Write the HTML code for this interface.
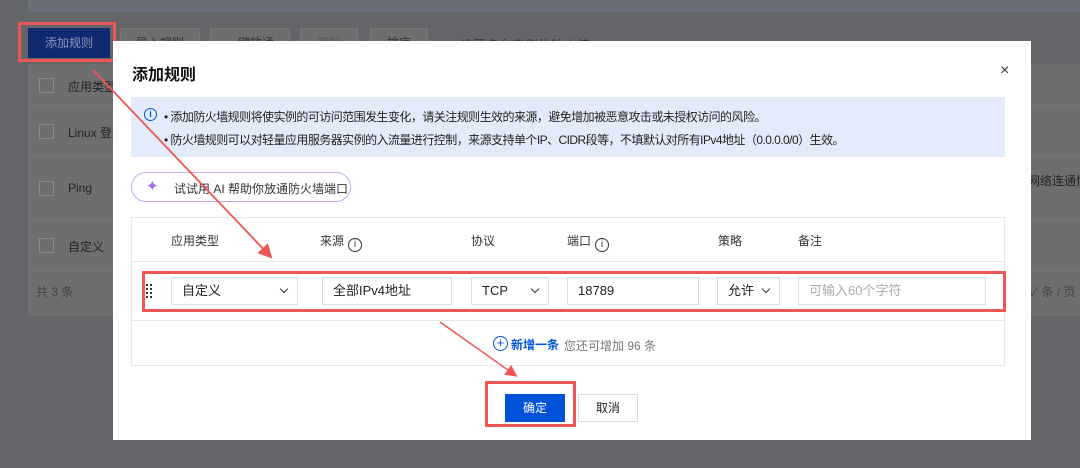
<!DOCTYPE html><html><head><meta charset="utf-8"><style>
*{box-sizing:border-box;margin:0;padding:0}
body{width:1080px;height:468px;overflow:hidden;background:#646568;font-family:"Liberation Sans","Noto Sans CJK SC",sans-serif;font-size:12px;color:#222;position:relative}
.a{position:absolute;white-space:nowrap}
.card{background:#6e6e6f}
.btn{position:absolute;top:28px;height:30px;background:#6e6e6f;border:1px solid #777;color:#333;text-align:center;line-height:28px}
.inp{position:absolute;height:28px;border:1px solid #dcdcdc;background:#fff;font-size:13px;line-height:26px;padding-left:10px;color:#222}
.chev{position:absolute;right:10px;top:8px;width:6px;height:6px;border-right:1.3px solid #333;border-bottom:1.3px solid #333;transform:rotate(45deg)}
.th{position:absolute;top:232px;font-size:12px;color:#333;white-space:nowrap}
.ic{display:inline-block;width:14px;height:14px;border:1px solid #333;border-radius:50%;font-size:10px;line-height:12px;text-align:center;vertical-align:-2px;margin-left:4px}
</style></head><body>
<div class="a" style="left:28px;top:0;width:1052px;height:12px;background:#6a6e78"></div>
<div class="a card" style="left:28px;top:64px;width:1052px;height:252px"></div>
<div class="a" style="left:28px;top:105px;width:1052px;height:1px;background:#777"></div>
<div class="a" style="left:28px;top:155px;width:1052px;height:1px;background:#777"></div>
<div class="a" style="left:28px;top:220px;width:1052px;height:1px;background:#777"></div>
<div class="a" style="left:28px;top:270px;width:1052px;height:1px;background:#777"></div>
<div class="btn" style="left:120px;width:80px">导入规则</div>
<div class="btn" style="left:210px;width:80px">一键放通</div>
<div class="btn" style="left:300px;width:58px;color:#555">删除</div>
<div class="btn" style="left:370px;width:58px">排序</div>
<div class="a" style="left:460px;top:35px;color:#333;font-size:13px">设置多台实例的防火墙?</div>
<div class="a" style="left:18px;top:22px;width:98px;height:40px;border:3px solid #ee5555"></div>
<div class="a" style="left:28px;top:28px;width:82px;height:30px;background:#0f2a6e;color:#8a93b8;text-align:center;line-height:30px;font-size:12px">添加规则</div>
<div class="a" style="left:39px;top:78px;width:15px;height:15px;border:1px solid #888"></div><div class="a" style="left:68px;top:78px;color:#222;font-size:12px">应用类型</div>
<div class="a" style="left:39px;top:124px;width:15px;height:15px;border:1px solid #888"></div><div class="a" style="left:68px;top:124px;color:#222;font-size:12px">Linux 登录</div>
<div class="a" style="left:39px;top:181px;width:15px;height:15px;border:1px solid #888"></div><div class="a" style="left:68px;top:181px;color:#222;font-size:12px">Ping</div>
<div class="a" style="left:39px;top:238px;width:15px;height:15px;border:1px solid #888"></div><div class="a" style="left:68px;top:238px;color:#222;font-size:12px">自定义</div>
<div class="a" style="left:36px;top:283px;color:#444;font-size:12px">共 3 条</div>
<div class="a" style="left:1028px;top:172px;color:#222;font-size:12px">网络连通性</div>
<div class="a" style="left:1030px;top:283px;color:#444;font-size:12px">✓ 条 / 页</div>

<div class="a" style="left:113px;top:41px;width:918px;height:399px;background:#fff"></div>
<div class="a" style="left:132px;top:61px;font-size:16px;font-weight:bold;color:#111">添加规则</div>
<div class="a" style="left:1000px;top:62px;font-size:16px;color:#333">×</div>
<div class="a" style="left:131px;top:97px;width:874px;height:60px;background:#e3ebfb"></div>
<div class="a" style="left:144px;top:108px;width:13px;height:13px;border:1.3px solid #0052d9;border-radius:50%;color:#0052d9;font-size:9px;line-height:11px;text-align:center;font-weight:bold">i</div>
<div class="a" style="left:164px;top:108px;font-size:12px;letter-spacing:-0.55px;color:#222">• 添加防火墙规则将使实例的可访问范围发生变化，请关注规则生效的来源，避免增加被恶意攻击或未授权访问的风险。</div>
<div class="a" style="left:164px;top:131px;font-size:12px;letter-spacing:-0.55px;color:#222">• 防火墙规则可以对轻量应用服务器实例的入流量进行控制，来源支持单个IP、CIDR段等，不填默认对所有IPv4地址（0.0.0.0/0）生效。</div>
<div class="a" style="left:131px;top:172px;width:220px;height:30px;border-radius:15px;border:1px solid #c9a7f0;background:#fff"></div>
<div class="a" style="left:146px;top:177px;font-size:15px;color:#9a6cf0">✦</div>
<div class="a" style="left:174px;top:180px;font-size:12px;color:#333">试试用 AI 帮助你放通防火墙端口</div>
<div class="a" style="left:131px;top:217px;width:874px;height:149px;border:1px solid #e7e7e7"></div>
<div class="a" style="left:132px;top:261px;width:872px;height:1px;background:#e7e7e7"></div>
<div class="a" style="left:132px;top:320px;width:872px;height:1px;background:#e7e7e7"></div>
<div class="th" style="left:171px">应用类型</div>
<div class="th" style="left:320px">来源<span class="ic">i</span></div>
<div class="th" style="left:471px">协议</div>
<div class="th" style="left:567px">端口<span class="ic">i</span></div>
<div class="th" style="left:718px">策略</div>
<div class="th" style="left:798px">备注</div>
<div class="a" style="left:146px;top:284px;width:6px;height:14px;border-left:2px dotted #333;border-right:2px dotted #333"></div>
<div class="inp" style="left:171px;top:277px;width:127px">自定义<span class="chev"></span></div>
<div class="inp" style="left:322px;top:277px;width:130px">全部IPv4地址</div>
<div class="inp" style="left:471px;top:277px;width:78px">TCP<span class="chev"></span></div>
<div class="inp" style="left:567px;top:277px;width:132px">18789</div>
<div class="inp" style="left:717px;top:277px;width:63px">允许<span class="chev"></span></div>
<div class="inp" style="left:798px;top:277px;width:188px;color:#aaa">可输入60个字符</div>
<div class="a" style="left:142px;top:271px;width:864px;height:41px;border:3px solid #ee5555"></div>
<div class="a" style="left:493px;top:336px;width:15px;height:15px;border:1.3px solid #0052d9;border-radius:50%;color:#0052d9;font-size:13px;line-height:12px;text-align:center">+</div>
<div class="a" style="left:511px;top:336px;font-size:12px;font-weight:bold;color:#0052d9">新增一条</div>
<div class="a" style="left:564px;top:337px;font-size:12px;color:#777">您还可增加 96 条</div>
<div class="a" style="left:485px;top:381px;width:91px;height:46px;border:3px solid #ee5555"></div>
<div class="a" style="left:505px;top:394px;width:60px;height:28px;background:#0052d9;color:#fff;text-align:center;line-height:28px;font-size:12px">确定</div>
<div class="a" style="left:578px;top:394px;width:60px;height:28px;border:1px solid #ddd;color:#222;text-align:center;line-height:26px;font-size:12px">取消</div>
<svg class="a" style="left:0;top:0" width="1080" height="468"><defs><marker id="m" markerWidth="8" markerHeight="8" refX="6" refY="4" orient="auto"><path d="M0,0 L8,4 L0,8 z" fill="#ee5555"/></marker></defs>
<line x1="93" y1="70" x2="270" y2="256" stroke="#ee5555" stroke-width="1.8" marker-end="url(#m)"/>
<line x1="440" y1="322" x2="515" y2="375" stroke="#ee5555" stroke-width="1.5" marker-end="url(#m)"/></svg>
</body></html>
